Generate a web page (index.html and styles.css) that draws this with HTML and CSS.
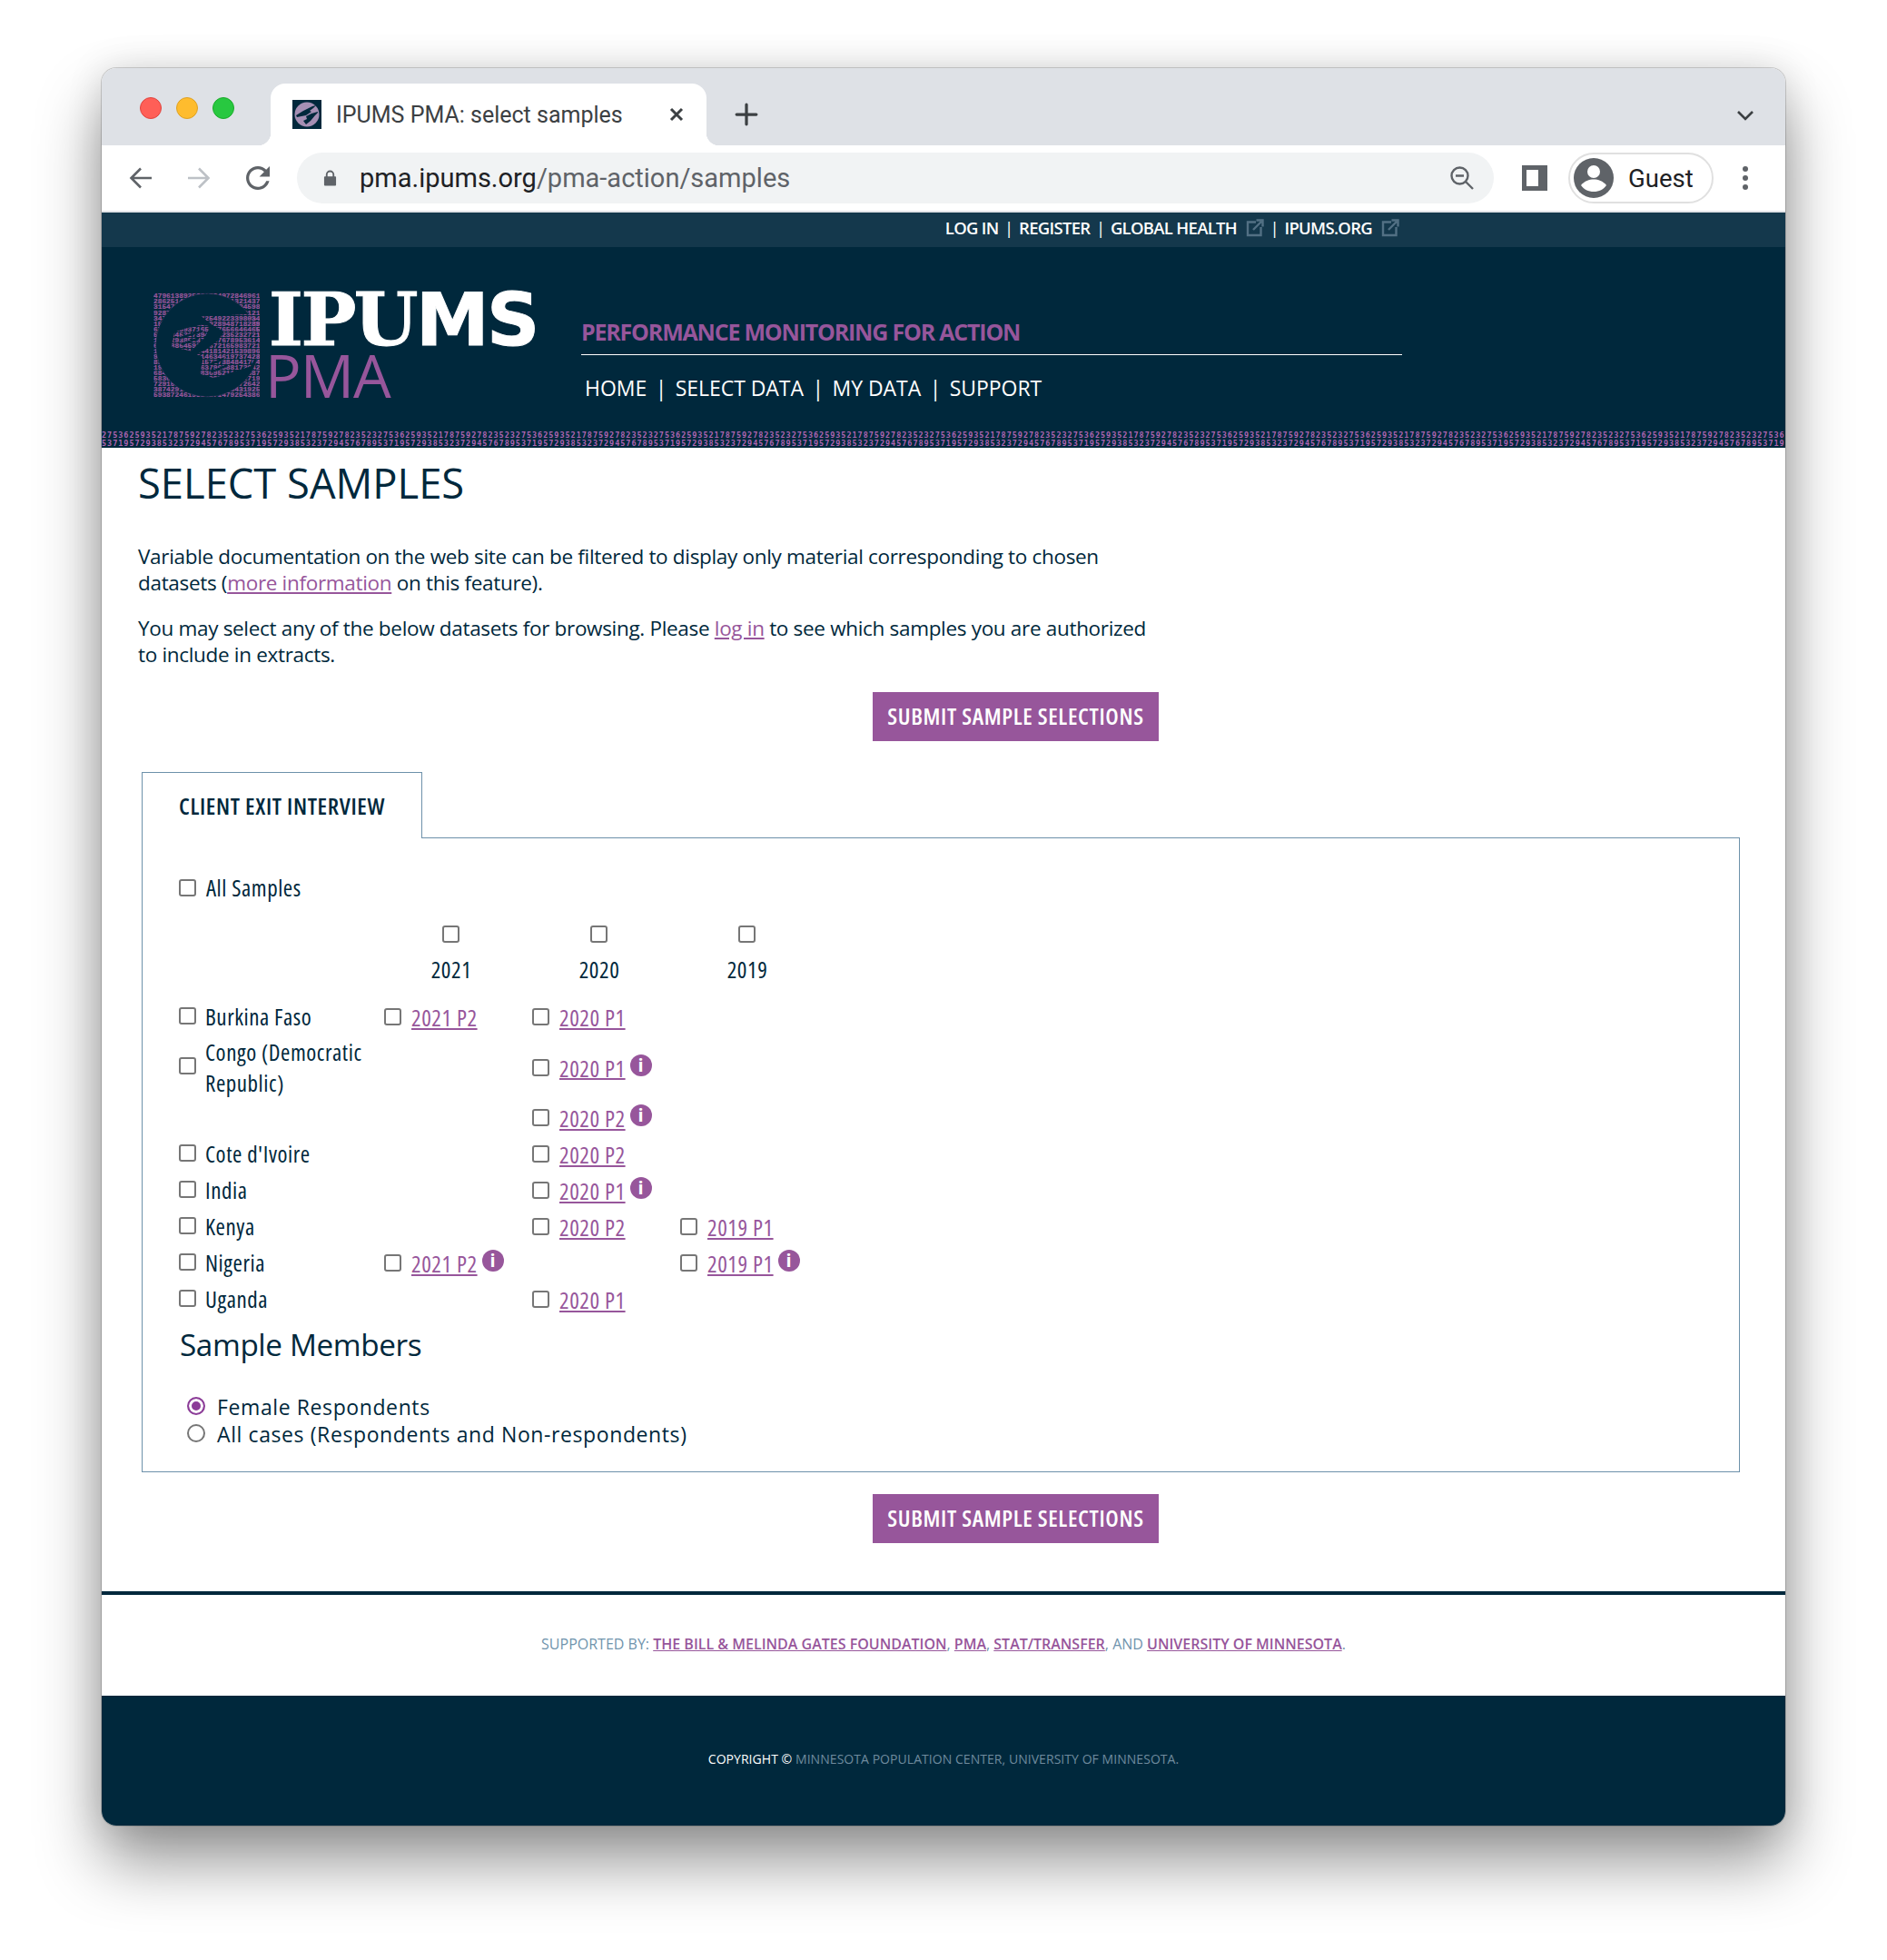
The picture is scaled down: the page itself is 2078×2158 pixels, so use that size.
FILE: index.html
```html
<!DOCTYPE html>
<html lang="en">
<head>
  <meta charset="UTF-8" />
  <title>IPUMS PMA: select samples</title>
  <link rel="stylesheet" href="styles.css">
</head>
<body>

  <div class="window">

    <div class="tabstrip">
      <div class="lights">
        <span class="light red"></span>
        <span class="light yellow"></span>
        <span class="light green"></span>
      </div>
      <div class="tab">
        <svg class="favicon" viewBox="0 0 32 32">
          <rect width="32" height="32" fill="#00283c"/>
          <circle cx="16" cy="16" r="13.5" fill="#a58fb4"/>
          <path d="M4 17l8-5 6-3 4-2 4-1-3 3-4 3 2 1-6 4-5 1-5 1z" fill="#00283c"/>
          <path d="M28 14l-3 3-5 6-5 4-3-4 4-2-1-3 6-3 7-2z" fill="#00283c"/>
        </svg>
        <span class="tab-title">IPUMS PMA: select samples</span>
        <svg class="tab-close" viewBox="0 0 16 16"><path d="M2 2l12 12M14 2L2 14"/></svg>
      </div>
      <svg class="new-tab" viewBox="0 0 24 24"><path d="M12 2v20M2 12h20"/></svg>
      <svg class="tab-menu" viewBox="0 0 20 12"><path d="M2 2l8 8 8-8"/></svg>
    </div>

    <div class="toolbar">
      <svg class="nav-icon" viewBox="0 0 26 24"><path d="M25 12H3M13 1.500 2.500 12 13 22.500"/></svg>
      <svg class="nav-icon disabled" viewBox="0 0 26 24"><path d="M1 12h22M13 1.500 23.500 12 13 22.500"/></svg>
      <svg class="reload" viewBox="4 4 16 16"><path d="M17.650 6.350C16.200 4.900 14.210 4 12 4c-4.420 0-7.990 3.580-7.990 8s3.570 8 7.990 8c3.730 0 6.840-2.550 7.730-6h-2.080c-.820 2.330-3.040 4-5.650 4-3.310 0-6-2.690-6-6s2.690-6 6-6c1.660 0 3.140.690 4.220 1.780L13 11h7V4l-2.350 2.350z"/></svg>
      <div class="omnibox">
        <svg class="lock" viewBox="0 0 16 20"><path d="M3 8V6a5 5 0 0 1 10 0v2h1a1 1 0 0 1 1 1v9a1 1 0 0 1-1 1H2a1 1 0 0 1-1-1V9a1 1 0 0 1 1-1zm2 0h6V6a3 3 0 0 0-6 0z"/></svg>
        <span class="url"><span class="url-host">pma.ipums.org</span>/pma-action/samples</span>
        <svg class="zoom-out" viewBox="0 0 28 28"><circle cx="11.500" cy="11.500" r="9"/><path d="M7 11.500h9M18 18l8 8"/></svg>
      </div>
      <span class="side-panel"></span>
      <div class="guest">
        <svg class="avatar" viewBox="0 0 44 44">
          <circle cx="22" cy="22" r="22" fill="#5f6368"/>
          <circle cx="22" cy="15" r="7" fill="#fff"/>
          <path d="M8 30c4-5 9-6.500 14-6.500S32 25 36 30c-3 4.500-8 7-14 7s-11-2.500-14-7z" fill="#fff"/>
        </svg>
        <span>Guest</span>
      </div>
      <div class="dots"><span></span><span></span><span></span></div>
    </div>

    <div class="topbar">
      <a>LOG IN</a><i>|</i><a>REGISTER</a><i>|</i><a>GLOBAL HEALTH</a>
      <svg class="ext" viewBox="0 0 20 20"><path d="M11 3.500H2v14.500h14.500V9"/><path d="M8 12l9-9M11.500 1.500h7v7" /></svg>
      <i>|</i><a>IPUMS.ORG</a>
      <svg class="ext" viewBox="0 0 20 20"><path d="M11 3.500H2v14.500h14.500V9"/><path d="M8 12l9-9M11.500 1.500h7v7" /></svg>
    </div>

    <header class="site-header">
      <div class="brand">
        <svg class="mark" viewBox="15 21 354 348">
          <defs>
            <g id="digits">
              <text x="15" y="39">4796138925281734972846961</text>
              <text x="15" y="57">2862514793658219321321437</text>
              <text x="15" y="75">3154798264173852694534598</text>
              <text x="15" y="94">9287461539827164538219121</text>
              <text x="15" y="112">3475928146372549223398034</text>
              <text x="15" y="130">1529483716253928948718289</text>
              <text x="15" y="149">6714825937165427656646465</text>
              <text x="15" y="167">5362845217394678235232721</text>
              <text x="15" y="185">1957293852371457678953614</text>
              <text x="15" y="204">6847386459273672165983721</text>
              <text x="15" y="222">1452147916544181421539896</text>
              <text x="15" y="240">9419829876514634619737428</text>
              <text x="15" y="259">8361682754715727384841764</text>
              <text x="15" y="277">1927346158763796588172642</text>
              <text x="15" y="295">6842937156283695211487387</text>
              <text x="15" y="314">5836194728561937428652719</text>
              <text x="15" y="332">7291584362719485631972642</text>
              <text x="15" y="350">3874291758316429586431925</text>
              <text x="15" y="368">5938724619584271479254386</text>
            </g>
            <clipPath id="hands">
              <path d="M175 100L262 96L330 92L368 110V252L352 238L340 265L215 305L170 290L180 240L160 225L190 210L230 180L250 150L215 130z"/>
              <path d="M85 152L120 140L175 128L205 132L185 170L140 215L75 200z"/>
            </clipPath>
          </defs>
          <use href="#digits"/>
          <circle cx="195" cy="195" r="172" fill="#00283c"/>
          <use href="#digits" clip-path="url(#hands)"/>
          <path class="fingers" d="M100 172L178 148M108 192L166 172M198 262L250 240M205 285L262 262"/>
        </svg>
        <div class="wordmark">
          <div class="wordmark-top">IPU<span>MS</span></div>
          <div class="wordmark-sub">PMA</div>
        </div>
      </div>
      <div class="header-right">
        <div class="project-name">PERFORMANCE MONITORING FOR ACTION</div>
        <nav class="main-nav">
          <a>HOME</a><i>|</i><a>SELECT DATA</a><i>|</i><a>MY DATA</a><i>|</i><a>SUPPORT</a>
        </nav>
      </div>
    </header>
    <div class="digit-strip">
      <div>27536259352178759278235232753625935217875927823523275362593521787592782352327536259352178759278235232753625935217875927823523275362593521787592782352327536259352178759278235232753625935217875927823523275362593521787592782352327536259352178759278235232753625935217875927823523275362593521787592782352327536</div>
      <div>53719572938532372945767895371957293853237294576789537195729385323729457678953719572938532372945767895371957293853237294576789537195729385323729457678953719572938532372945767895371957293853237294576789537195729385323729457678953719572938532372945767895371957293853237294576789537195729385323729457678953719</div>
    </div>

    <main class="content">
      <h1>SELECT SAMPLES</h1>
      <p class="intro">Variable documentation on the web site can be filtered to display only material corresponding to chosen datasets (<a href="#">more information</a> on this feature).</p>
      <p class="intro">You may select any of the below datasets for browsing. Please <a href="#">log in</a> to see which samples you are authorized to include in extracts.</p>

      <div class="submit-row"><button class="submit-btn">SUBMIT SAMPLE SELECTIONS</button></div>

      <div class="tab-label">CLIENT EXIT INTERVIEW</div>
      <section class="panel">
        <label class="all-samples"><input type="checkbox"> All Samples</label>

        <table class="samples">
          <tr class="year-checks">
            <td class="c-country"></td>
            <td><input type="checkbox"></td>
            <td><input type="checkbox"></td>
            <td><input type="checkbox"></td>
          </tr>
          <tr class="year-labels">
            <td class="c-country"></td>
            <td>2021</td>
            <td>2020</td>
            <td>2019</td>
          </tr>
          <tr class="r40">
            <th><input type="checkbox"><span>Burkina Faso</span></th>
            <td><input type="checkbox"><a href="#">2021 P2</a></td>
            <td><input type="checkbox"><a href="#">2020 P1</a></td>
            <td></td>
          </tr>
          <tr class="r-congo">
            <th><input type="checkbox"><span>Congo (Democratic Republic)</span></th>
            <td></td>
            <td><input type="checkbox"><a href="#">2020 P1</a><b class="info">i</b></td>
            <td></td>
          </tr>
          <tr class="r-p2">
            <th></th>
            <td></td>
            <td><input type="checkbox"><a href="#">2020 P2</a><b class="info">i</b></td>
            <td></td>
          </tr>
          <tr class="r40">
            <th><input type="checkbox"><span>Cote d'Ivoire</span></th>
            <td></td>
            <td><input type="checkbox"><a href="#">2020 P2</a></td>
            <td></td>
          </tr>
          <tr class="r40">
            <th><input type="checkbox"><span>India</span></th>
            <td></td>
            <td><input type="checkbox"><a href="#">2020 P1</a><b class="info">i</b></td>
            <td></td>
          </tr>
          <tr class="r40">
            <th><input type="checkbox"><span>Kenya</span></th>
            <td></td>
            <td><input type="checkbox"><a href="#">2020 P2</a></td>
            <td><input type="checkbox"><a href="#">2019 P1</a></td>
          </tr>
          <tr class="r40">
            <th><input type="checkbox"><span>Nigeria</span></th>
            <td><input type="checkbox"><a href="#">2021 P2</a><b class="info">i</b></td>
            <td></td>
            <td><input type="checkbox"><a href="#">2019 P1</a><b class="info">i</b></td>
          </tr>
          <tr class="r40">
            <th><input type="checkbox"><span>Uganda</span></th>
            <td></td>
            <td><input type="checkbox"><a href="#">2020 P1</a></td>
            <td></td>
          </tr>
        </table>

        <h2>Sample Members</h2>
        <label class="radio-row"><input type="radio" name="members" checked> Female Respondents</label>
        <label class="radio-row"><input type="radio" name="members"> All cases (Respondents and Non-respondents)</label>
      </section>

      <div class="submit-row lower"><button class="submit-btn">SUBMIT SAMPLE SELECTIONS</button></div>
    </main>

    <div class="supported">
      SUPPORTED BY: <a href="#">THE BILL &amp; MELINDA GATES FOUNDATION</a>, <a href="#">PMA</a>, <a href="#">STAT/TRANSFER</a>, AND <a href="#">UNIVERSITY OF MINNESOTA</a>.
    </div>
    <footer class="site-footer"><span>COPYRIGHT &copy;</span> MINNESOTA POPULATION CENTER, UNIVERSITY OF MINNESOTA.</footer>

  </div>

</body>
</html>
```

FILE: styles.css
```css
* {
  box-sizing: border-box;
}

body {
  margin: 0;
  padding: 75px 112px 148px;
  background: #fff;
  font-family: "Open Sans", sans-serif;
  color: #00283c;
}

.window {
  width: 1854px;
  height: 1935px;
  border-radius: 16px;
  overflow: hidden;
  background: #fff;
  box-shadow: 0 0 0 1px rgba(0, 0, 0, 0.16), 0 40px 70px rgba(0, 0, 0, 0.42), 0 0 40px rgba(0, 0, 0, 0.12);
}

/* browser chrome */
.tabstrip {
  position: relative;
  display: flex;
  align-items: flex-end;
  height: 85px;
  background: #dee1e6;
}

.lights {
  display: flex;
  gap: 16px;
  align-self: flex-start;
  margin: 32px 0 0 42px;
}

.light {
  width: 24px;
  height: 24px;
  border-radius: 50%;
}

.red { background: #ff5f57; border: 1px solid #e0443e; }
.yellow { background: #febc2e; border: 1px solid #dea123; }
.green { background: #28c840; border: 1px solid #1aab29; }

.tab {
  position: relative;
  display: flex;
  align-items: center;
  width: 480px;
  height: 68px;
  margin-left: 40px;
  padding: 0 24px;
  background: #fff;
  border-radius: 16px 16px 0 0;
}

.tab::before,
.tab::after {
  content: "";
  position: absolute;
  bottom: 0;
  width: 14px;
  height: 14px;
}

.tab::before {
  left: -14px;
  background: radial-gradient(circle at 0 0, #dee1e6 14px, #fff 14.5px);
}

.tab::after {
  right: -14px;
  background: radial-gradient(circle at 100% 0, #dee1e6 14px, #fff 14.5px);
}

.favicon {
  width: 32px;
  height: 32px;
  flex: none;
}

.tab-title {
  margin-left: 16px;
  font-family: Roboto, sans-serif;
  font-size: 25px;
  color: #3c4043;
  white-space: nowrap;
}

.tab-close {
  width: 16px;
  height: 16px;
  margin-left: auto;
  margin-right: 1px;
  fill: none;
  stroke: #3c4043;
  stroke-width: 3;
}

.new-tab {
  width: 26px;
  height: 26px;
  margin: 0 0 21px 31px;
  fill: none;
  stroke: #3c4043;
  stroke-width: 3;
  stroke-linecap: round;
}

.tab-menu {
  width: 20px;
  height: 12px;
  margin: 0 34px 27px auto;
  fill: none;
  stroke: #3c4043;
  stroke-width: 2.600;
}

.toolbar {
  display: flex;
  align-items: center;
  height: 74px;
  padding: 0 0 0 30px;
  background: #fff;
  border-bottom: 2px solid #e2e4e7;
}

.nav-icon {
  width: 26px;
  height: 24px;
  margin-right: 38px;
  fill: none;
  stroke: #5f6368;
  stroke-width: 2.600;
}

.nav-icon.disabled {
  stroke: #bdc1c6;
}

.reload {
  width: 26px;
  height: 26px;
  margin-left: 1px;
  fill: #5f6368;
}

.omnibox {
  display: flex;
  align-items: center;
  width: 1318px;
  height: 56px;
  margin-left: 30px;
  padding: 0 21px 0 29px;
  background: #f1f3f4;
  border-radius: 28px;
}

.lock {
  width: 15px;
  height: 20px;
  fill: #5f6368;
}

.url {
  margin-left: 25px;
  font-family: Roboto, sans-serif;
  font-size: 29px;
  color: #5f6368;
  white-space: nowrap;
}

.url-host {
  color: #202124;
}

.zoom-out {
  width: 28px;
  height: 28px;
  margin-left: auto;
  fill: none;
  stroke: #5f6368;
  stroke-width: 2.400;
}

.side-panel {
  width: 28px;
  height: 28px;
  margin-left: 31px;
  background: #fff;
  border: 5px solid #5f6368;
  border-right-width: 10px;
}

.guest {
  display: flex;
  align-items: center;
  gap: 16px;
  width: 160px;
  height: 56px;
  margin-left: 23px;
  padding-left: 4px;
  border: 2px solid #e0e0e0;
  border-radius: 28px;
  font-family: Roboto, sans-serif;
  font-size: 27.500px;
  color: #202124;
}

.avatar {
  width: 44px;
  height: 44px;
}

.dots {
  display: flex;
  flex-direction: column;
  gap: 4px;
  margin-left: 32px;
}

.dots span {
  width: 6px;
  height: 6px;
  border-radius: 50%;
  background: #5f6368;
}

/* site header */
.topbar {
  display: flex;
  align-items: center;
  justify-content: flex-end;
  height: 38px;
  padding: 0 425px 5px 0;
  background: #14384c;
  color: #fff;
  font-size: 18.500px;
  font-weight: 600;
  letter-spacing: -0.7px;
}

.topbar i {
  margin: 0 6.500px;
  font-style: normal;
  font-weight: 400;
}

.ext {
  width: 20px;
  height: 20px;
  margin-left: 10px;
  fill: none;
  stroke: #527084;
  stroke-width: 2.400;
}

.site-header {
  display: flex;
  height: 203px;
  padding: 50px 0 0 57px;
  background: #00283c;
}

.brand {
  display: flex;
  gap: 10px;
}

.mark {
  width: 117px;
  height: 116px;
  font-family: "Liberation Mono", monospace;
  font-size: 23.700px;
  font-weight: 700;
  fill: #97569b;
  stroke: #97569b;
  stroke-width: 0.600;
}

.mark .fingers {
  fill: none;
  stroke: #00283c;
  stroke-width: 7;
}

.wordmark {
  width: 293px;
}

.wordmark-top {
  height: 66px;
  font-family: "DejaVu Serif", serif;
  font-size: 81px;
  font-weight: 700;
  line-height: 60px;
  letter-spacing: -2.500px;
  color: #fff;
  white-space: nowrap;
  -webkit-text-stroke: 1px #fff;
}

.wordmark-top span {
  font-family: "DejaVu Sans", sans-serif;
}

.wordmark-sub {
  margin-left: -4px;
  font-size: 66px;
  line-height: 48px;
  letter-spacing: -1px;
  color: #97569b;
}

.header-right {
  width: 904px;
  margin-left: 51px;
}

.project-name {
  padding: 26px 0 8px;
  border-bottom: 1px solid #fff;
  font-size: 25px;
  font-weight: 700;
  line-height: 34px;
  letter-spacing: -1.2px;
  color: #97569b;
}

.main-nav {
  display: flex;
  padding: 19px 0 0 4px;
  font-size: 23px;
  line-height: 34px;
  letter-spacing: -0.05px;
  color: #fff;
}

.main-nav i {
  margin: 0 9.500px;
  font-style: normal;
}

.digit-strip {
  height: 18px;
  overflow: hidden;
  background: #00283c;
  font-family: "DejaVu Sans Mono", monospace;
  font-size: 8.500px;
  font-weight: 700;
  line-height: 9px;
  letter-spacing: 0.96px;
  color: #ad64b0;
  white-space: nowrap;
}

/* page body */
.content {
  height: 1245px;
  padding: 0 41px 0 40px;
}

h1 {
  margin: 14px 0 0;
  font-size: 45.300px;
  font-weight: 400;
  line-height: 50px;
}

.intro {
  width: 1130px;
  margin: 41px 0 0;
  font-size: 22.500px;
  line-height: 29px;
  letter-spacing: -0.32px;
}

.intro + .intro {
  margin-top: 21px;
}

.intro a,
.samples a,
.supported a {
  color: #97569b;
}

.submit-row {
  margin-top: 27px;
  padding-left: 809px;
}

.submit-row.lower {
  margin-top: 24px;
}

.submit-btn {
  width: 315px;
  height: 54px;
  padding: 0 0 2px;
  background: #97569b;
  border: none;
  font-family: "Open Sans", sans-serif;
  font-size: 25.500px;
  font-weight: 600;
  font-stretch: 85%;
  letter-spacing: 0.65px;
  color: #fff;
}

.tab-label {
  position: relative;
  z-index: 1;
  width: 309px;
  height: 73px;
  margin: 34px 0 -1px 4px;
  padding: 21px 0 0 40px;
  background: #fff;
  border: 1px solid #6d91aa;
  border-bottom: none;
  font-size: 25.500px;
  font-weight: 600;
  font-stretch: 85%;
  line-height: 30px;
  letter-spacing: 0.65px;
}

.panel {
  width: 1760px;
  height: 699px;
  margin-left: 4px;
  padding: 38px 0 0 40px;
  border: 1px solid #6d91aa;
}

.all-samples {
  display: flex;
  align-items: center;
  gap: 11px;
  height: 30px;
  padding-top: 2px;
  font-size: 25px;
  font-stretch: 85%;
  letter-spacing: 0.55px;
}

.all-samples input {
  margin-bottom: 7px;
}

input[type="checkbox"] {
  appearance: none;
  flex: none;
  width: 19px;
  height: 19px;
  margin: 0;
  background: #fff;
  border: 2px solid #767676;
  border-radius: 3px;
}

input[type="radio"] {
  appearance: none;
  flex: none;
  width: 20px;
  height: 20px;
  margin: 0 0 3px;
  background: #fff;
  border: 2px solid #767676;
  border-radius: 50%;
}

input[type="radio"]:checked {
  border-color: #8c3d98;
  box-shadow: inset 0 0 0 3px #fff;
  background: #8c3d98;
}

.samples {
  margin-top: 14px;
  border-collapse: collapse;
  table-layout: fixed;
  font-size: 25px;
  font-stretch: 85%;
  letter-spacing: 0.55px;
}

.samples th,
.samples td {
  width: 163px;
  height: 40px;
  padding: 0;
  font-weight: 400;
  text-align: left;
}

.samples th,
.samples .c-country {
  width: 226px;
}

.samples th input,
.samples td input {
  margin: 0 11px 2px 0;
  vertical-align: middle;
}

.samples th input {
  margin-right: 10px;
}

.samples th {
  display: flex;
  align-items: center;
  line-height: 34px;
}

.samples th span {
  width: 190px;
}

.samples a {
  vertical-align: middle;
  text-decoration-thickness: 2px;
}

.samples .year-checks td,
.samples .year-labels td {
  padding: 0 17px 0 0;
  text-align: center;
}

.samples .year-checks td input {
  margin: 0;
}

.samples .year-labels td {
  height: 54px;
  padding: 0 15px 11px 0;
}

.samples .r-congo th,
.samples .r-congo td {
  height: 68px;
}

.samples .r-congo th {
  padding-top: 3px;
}

.samples .r-congo td,
.samples .r-p2 td {
  padding-top: 3px;
}

.samples .r-p2 th,
.samples .r-p2 td {
  height: 43px;
}

.info {
  display: inline-block;
  width: 24px;
  height: 24px;
  margin-left: 5px;
  vertical-align: 3px;
  border-radius: 50%;
  background: #97569b;
  font-size: 20px;
  font-weight: 700;
  font-stretch: 100%;
  line-height: 24px;
  letter-spacing: 0;
  text-align: center;
  color: #fff;
}

.panel h2 {
  margin: 8px 0 32px 1px;
  font-size: 33.300px;
  font-weight: 400;
  line-height: 44px;
  letter-spacing: -0.4px;
}

.radio-row {
  display: flex;
  align-items: center;
  gap: 13px;
  height: 30px;
  padding-left: 9px;
  font-size: 23px;
  letter-spacing: 0.6px;
}

/* footers */
.supported {
  height: 115px;
  padding-top: 43px;
  border-top: 4px solid #00283c;
  font-size: 16px;
  text-align: center;
  color: #7094ad;
}

.supported a {
  font-weight: 600;
}

.site-footer {
  height: 157px;
  padding-top: 60px;
  background: #00283c;
  font-size: 14px;
  letter-spacing: 0.05px;
  text-align: center;
  color: #6f8b9e;
}

.site-footer span {
  color: #fff;
}
```
